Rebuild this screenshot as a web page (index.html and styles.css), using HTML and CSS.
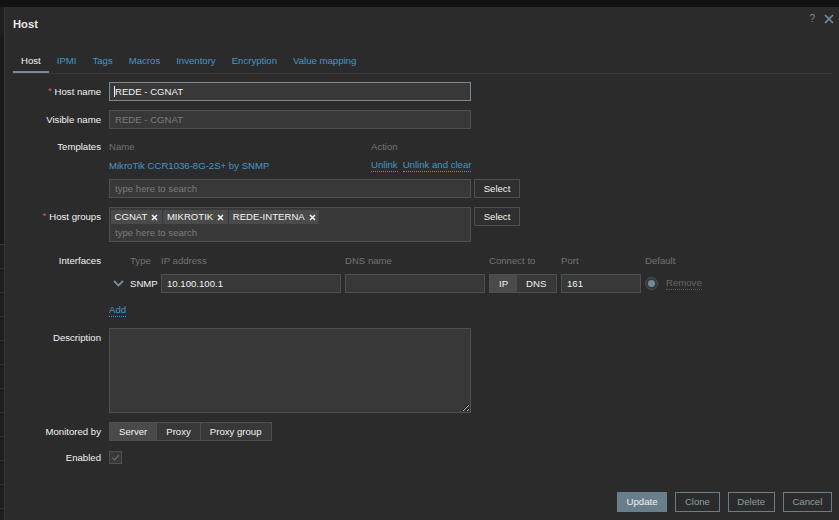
FILE: index.html
```html
<!DOCTYPE html>
<html lang="en">
<head>
<meta charset="utf-8">
<title>Host</title>
<link rel="stylesheet" href="styles.css">
</head>
<body>
<div class="page">
  <div class="page-top"></div>
  <div class="page-nav"></div>
  <div class="page-body"></div>
  <div class="page-list">
    <div class="page-row"></div><div class="page-row"></div><div class="page-row"></div>
    <div class="page-row"></div><div class="page-row"></div><div class="page-row"></div>
    <div class="page-row"></div><div class="page-row"></div><div class="page-row"></div>
    <div class="page-row"></div><div class="page-row"></div>
  </div>
</div>

<div class="modal">
  <div class="modal-head">
    <h4 class="modal-title">Host</h4>
    <div class="head-icons">
      <span class="help">?</span>
      <svg class="close" width="10" height="10" viewBox="0 0 10 10"><path d="M1 1L9 9M9 1L1 9" stroke="#768d99" stroke-width="1.7" fill="none"/></svg>
    </div>
  </div>

  <ul class="tabs">
    <li class="tab active">Host</li>
    <li class="tab">IPMI</li>
    <li class="tab">Tags</li>
    <li class="tab">Macros</li>
    <li class="tab">Inventory</li>
    <li class="tab">Encryption</li>
    <li class="tab">Value mapping</li>
  </ul>

  <div class="form">
    <div class="label"><span class="req">*</span>Host name</div>
    <div class="field"><div class="input wide focus"><span class="caret"></span>REDE - CGNAT</div></div>

    <div class="label">Visible name</div>
    <div class="field"><div class="input wide muted">REDE - CGNAT</div></div>

    <div class="label label-tpl">Templates</div>
    <div class="field">
      <div class="tpl">
        <div class="tpl-head"><span class="c-name">Name</span><span class="c-act">Action</span></div>
        <div class="tpl-row">
          <span class="c-name"><span class="link">MikroTik CCR1036-8G-2S+ by SNMP</span></span>
          <span class="c-act actions"><span class="link dotted">Unlink</span><span class="link dotted">Unlink and clear</span></span>
        </div>
      </div>
      <div class="with-btn search-row">
        <div class="input wide muted">type here to search</div>
        <button class="btn-grey">Select</button>
      </div>
    </div>

    <div class="label label-hg"><span class="req">*</span>Host groups</div>
    <div class="field">
      <div class="with-btn">
        <div class="multiselect">
          <div class="tags">
            <span class="tag">CGNAT<svg class="tag-x" width="7" height="7" viewBox="0 0 7 7"><path d="M1 1L6 6M6 1L1 6" stroke="#f2f2f2" stroke-width="1.6" fill="none"/></svg></span>
            <span class="tag">MIKROTIK<svg class="tag-x" width="7" height="7" viewBox="0 0 7 7"><path d="M1 1L6 6M6 1L1 6" stroke="#f2f2f2" stroke-width="1.6" fill="none"/></svg></span>
            <span class="tag">REDE-INTERNA<svg class="tag-x" width="7" height="7" viewBox="0 0 7 7"><path d="M1 1L6 6M6 1L1 6" stroke="#f2f2f2" stroke-width="1.6" fill="none"/></svg></span>
          </div>
          <div class="ms-search">type here to search</div>
        </div>
        <button class="btn-grey">Select</button>
      </div>
    </div>

    <div class="label">Interfaces</div>
    <div class="field">
      <div class="if-grid">
        <span></span>
        <span class="th">Type</span>
        <span class="th">IP address</span>
        <span class="th">DNS name</span>
        <span class="th">Connect to</span>
        <span class="th">Port</span>
        <span class="th">Default</span>

        <span class="chev"><svg width="11" height="7" viewBox="0 0 11 7"><path d="M1 1L5.5 5.5L10 1" stroke="#768d99" stroke-width="1.8" fill="none"/></svg></span>
        <span class="if-type">SNMP</span>
        <div class="input">10.100.100.1</div>
        <div class="input"></div>
        <div class="seg">
          <span class="seg-item active">IP</span>
          <span class="seg-item">DNS</span>
        </div>
        <div class="input">161</div>
        <span class="default-cell">
          <span class="radio"><span class="radio-dot"></span></span>
          <span class="remove">Remove</span>
        </span>
      </div>
      <div class="add-row"><span class="link dotted">Add</span></div>
    </div>

    <div class="label">Description</div>
    <div class="field"><textarea class="textarea"></textarea></div>

    <div class="label">Monitored by</div>
    <div class="field">
      <div class="seg">
        <span class="seg-item mon active">Server</span>
        <span class="seg-item mon">Proxy</span>
        <span class="seg-item mon">Proxy group</span>
      </div>
    </div>

    <div class="label label-en">Enabled</div>
    <div class="field">
      <span class="checkbox"><svg width="11" height="11" viewBox="0 0 11 11"><path d="M2.5 5.8L4.6 7.9L8.8 3.2" stroke="#62737e" stroke-width="1.2" fill="none"/></svg></span>
    </div>
  </div>

  <div class="footer">
    <button class="btn-main">Update</button>
    <button class="btn-alt">Clone</button>
    <button class="btn-alt">Delete</button>
    <button class="btn-alt">Cancel</button>
  </div>
</div>
</body>
</html>
```

FILE: styles.css
```css
* { box-sizing: border-box; }

body {
  margin: 0;
  width: 839px;
  height: 520px;
  overflow: hidden;
  position: relative;
  background: #161616;
  font-family: "Liberation Sans", Arial, sans-serif;
  font-size: 9.6px;
  color: #f2f2f2;
}

/* backdrop page */
.page { display: flex; flex-direction: column; height: 520px; }
.page-top { height: 7px; background: #121212; }
.page-nav { height: 28px; background: #1f1f1f; }
.page-body { height: 210px; background: #1a1a1a; border-bottom: 1px solid #3a3a3a; }
.page-list { flex: 1; background: #1e1e1e; }
.page-row { height: 24px; border-bottom: 1px solid #2f2f2f; }

/* modal */
.modal {
  position: absolute;
  left: 4px;
  top: 7px;
  width: 840px;
  height: 520px;
  background: #2b2b2b;
  border-left: 1px solid #383838;
  padding: 0 12px 0 8px;
  display: flex;
  flex-direction: column;
}

.modal-head {
  display: flex;
  justify-content: space-between;
  align-items: flex-start;
  padding-top: 10px;
  height: 24px;
}
.modal-title {
  margin: 0;
  font-size: 11.2px;
  font-weight: bold;
  line-height: 14px;
  color: #e8e8e8;
}
.head-icons {
  display: flex;
  align-items: center;
  gap: 9px;
  margin-top: -3px;
  margin-right: -2px;
}
.help { color: #768d99; font-size: 10px; line-height: 10px; }
.close { display: block; }

.tabs {
  list-style: none;
  margin: 18px 0 0;
  padding: 0;
  display: flex;
  border-bottom: 1px solid #383838;
}
.tab {
  padding: 6px 8px 4px;
  line-height: 12px;
  border-bottom: 2px solid transparent;
  color: #4796c4;
}
.tab.active { color: #f2f2f2; border-bottom-color: #768d99; }

/* form */
.form {
  margin-top: 8px;
  display: grid;
  grid-template-columns: 88px auto;
  column-gap: 8px;
  row-gap: 9px;
  align-items: start;
}
.label {
  text-align: right;
  line-height: 19px;
  white-space: nowrap;
  color: #f2f2f2;
}
.label-tpl { line-height: 17px; }
.label-hg { line-height: 20px; }
.label-en { line-height: 13px; margin-top: 1px; }
.req { color: #e45959; margin-right: 3px; position: relative; top: -1px; }

.input {
  height: 19px;
  background: #383838;
  border: 1px solid #4f4f4f;
  padding: 0 5px;
  line-height: 17px;
  color: #f2f2f2;
  white-space: nowrap;
  overflow: hidden;
}
.input.wide { width: 362px; }
.input.focus { border-color: #768d99; }
.input.muted { color: #7b7b7b; }
.caret {
  display: inline-block;
  width: 1px;
  height: 11px;
  background: #f2f2f2;
  vertical-align: -2px;
  margin-left: -1px;
}

.link { color: #4796c4; white-space: nowrap; }
.link.dotted {
  display: inline-block;
  line-height: 12px;
  border-bottom: 1px dotted #4796c4;
}

/* templates */
.tpl { width: 362px; }
.tpl-head { display: flex; line-height: 17px; color: #737373; }
.tpl-row { display: flex; align-items: center; height: 20px; white-space: nowrap; }
.c-name { width: 262px; flex: none; }
.actions { display: flex; gap: 5px; }
.with-btn { display: flex; align-items: flex-start; gap: 3px; }
.search-row { margin-top: 4px; }

.btn-grey {
  height: 19px;
  width: 46px;
  padding: 0;
  background: #2f2f2f;
  border: 1px solid #4f4f4f;
  color: #f2f2f2;
  font: inherit;
}

/* host groups */
.multiselect {
  width: 362px;
  height: 35px;
  background: #383838;
  border: 1px solid #4f4f4f;
  padding: 2px 1px 0;
}
.tags { display: flex; gap: 1.5px; }
.tag {
  display: inline-flex;
  align-items: center;
  height: 14px;
  padding: 0 3.5px 0 3.5px;
  background: #4a4a4a;
  color: #f2f2f2;
  line-height: 14px;
}
.tag-x { margin-left: 4px; }
.ms-search { color: #7b7b7b; line-height: 13px; padding: 2px 4px 0; }

/* interfaces */
.if-grid {
  display: grid;
  grid-template-columns: 17px 27px 180px 140px 68px 80px auto;
  column-gap: 4px;
  row-gap: 4px;
  align-items: center;
}
.th { line-height: 19px; color: #737373; white-space: nowrap; }
.chev { display: flex; padding-left: 4px; }
.chev svg { display: block; }
.if-type { color: #f2f2f2; }
.seg { display: inline-flex; height: 19px; border: 1px solid #4f4f4f; background: #383838; }
.seg-item { line-height: 17px; padding: 0 9px; color: #f2f2f2; white-space: nowrap; }
.seg-item.active { background: #4a4a4a; }
.seg-item.mon + .seg-item.mon { border-left: 1px solid #4f4f4f; }
.default-cell { display: flex; align-items: center; gap: 8px; }
.radio {
  width: 13px;
  height: 13px;
  border-radius: 50%;
  border: 1px solid #4f4f4f;
  background: #383838;
  display: flex;
  align-items: center;
  justify-content: center;
}
.radio-dot { width: 7px; height: 7px; border-radius: 50%; background: #6e8a9b; }
.remove {
  color: #666;
  line-height: 12px;
  border-bottom: 1px dotted #5a5a5a;
}
.add-row { margin-top: 8px; height: 18px; padding-top: 3px; }

/* description */
.textarea {
  display: block;
  width: 362px;
  height: 85px;
  margin: 0;
  background: #383838;
  border: 1px solid #4f4f4f;
  color: #f2f2f2;
  font: inherit;
  resize: both;
  color-scheme: dark;
}

.checkbox {
  display: flex;
  align-items: center;
  justify-content: center;
  width: 13px;
  height: 13px;
  margin-top: 1px;
  background: #383838;
  border: 1px solid #4f4f4f;
}
.checkbox svg { display: block; }

/* footer */
.footer {
  display: flex;
  justify-content: flex-end;
  gap: 8px;
  margin-top: 28px;
}
.footer button {
  height: 20px;
  padding: 0 8.7px;
  font: inherit;
  line-height: 18px;
}
.btn-main { background: #687e8a; border: 1px solid #687e8a; color: #f2f2f2; }
.btn-alt { background: transparent; border: 1px solid #687e8a; color: #8f9ea6; }
```
